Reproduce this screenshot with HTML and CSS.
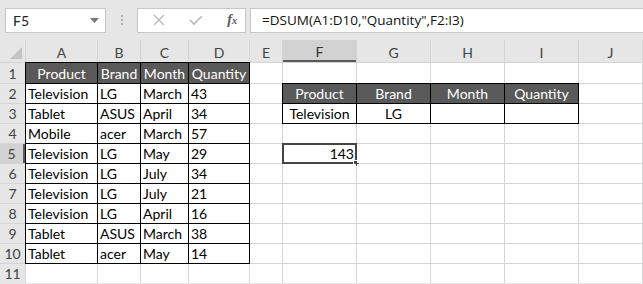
FILE: index.html
```html
<!DOCTYPE html>
<html lang="en">
<head>
    <meta charset="UTF-8">
    <title>DSUM example</title>
    <link rel="stylesheet" href="styles.css">
</head>
<body>
    <div class="toolbar">
        <div class="namebox">
            <span>F5</span>
            <svg class="caret" width="9" height="5" viewBox="0 0 9 5"><path d="M0 0h9L4.5 5z" fill="#777"/></svg>
        </div>
        <div class="grip"><i></i><i></i><i></i></div>
        <div class="fxbox">
            <svg width="12" height="12" viewBox="0 0 12 12"><path d="M1 1l10 10M11 1L1 11" stroke="#b8b8b8" stroke-width="1.2" fill="none"/></svg>
            <svg width="14" height="12" viewBox="0 0 14 12"><path d="M1 6l4 4 8-8" stroke="#b8b8b8" stroke-width="1.6" fill="none"/></svg>
            <span class="fx">f<sub>x</sub></span>
        </div>
        <div class="formula">=DSUM(A1:D10,"Quantity",F2:I3)</div>
    </div>

    <div class="sheet">
        <div class="hd corner"><svg width="12" height="12" viewBox="0 0 12 12"><path d="M12 0v12H0z" fill="#c4c4c4"/></svg></div>
        <div class="hd">A</div><div class="hd">B</div><div class="hd">C</div><div class="hd">D</div>
        <div class="hd">E</div><div class="hd sel">F</div><div class="hd">G</div><div class="hd">H</div>
        <div class="hd">I</div><div class="hd">J</div>

        <div class="rh">1</div>
        <div class="c b th">Product</div><div class="c b th">Brand</div><div class="c b th">Month</div><div class="c b th">Quantity</div>
        <div class="c"></div><div class="c"></div><div class="c"></div><div class="c"></div><div class="c"></div><div class="c"></div>

        <div class="rh">2</div>
        <div class="c b">Television</div><div class="c b">LG</div><div class="c b">March</div><div class="c b">43</div>
        <div class="c"></div><div class="c b th">Product</div><div class="c b th">Brand</div><div class="c b th">Month</div><div class="c b th">Quantity</div><div class="c"></div>

        <div class="rh">3</div>
        <div class="c b">Tablet</div><div class="c b">ASUS</div><div class="c b">April</div><div class="c b">34</div>
        <div class="c"></div><div class="c b mid">Television</div><div class="c b mid">LG</div><div class="c b"></div><div class="c b"></div><div class="c"></div>

        <div class="rh">4</div>
        <div class="c b">Mobile</div><div class="c b">acer</div><div class="c b">March</div><div class="c b">57</div>
        <div class="c"></div><div class="c"></div><div class="c"></div><div class="c"></div><div class="c"></div><div class="c"></div>

        <div class="rh sel">5</div>
        <div class="c b">Television</div><div class="c b">LG</div><div class="c b">May</div><div class="c b">29</div>
        <div class="c"></div><div class="c active num">143<span class="handle"></span></div><div class="c"></div><div class="c"></div><div class="c"></div><div class="c"></div>

        <div class="rh">6</div>
        <div class="c b">Television</div><div class="c b">LG</div><div class="c b">July</div><div class="c b">34</div>
        <div class="c"></div><div class="c"></div><div class="c"></div><div class="c"></div><div class="c"></div><div class="c"></div>

        <div class="rh">7</div>
        <div class="c b">Television</div><div class="c b">LG</div><div class="c b">July</div><div class="c b">21</div>
        <div class="c"></div><div class="c"></div><div class="c"></div><div class="c"></div><div class="c"></div><div class="c"></div>

        <div class="rh">8</div>
        <div class="c b">Television</div><div class="c b">LG</div><div class="c b">April</div><div class="c b">16</div>
        <div class="c"></div><div class="c"></div><div class="c"></div><div class="c"></div><div class="c"></div><div class="c"></div>

        <div class="rh">9</div>
        <div class="c b">Tablet</div><div class="c b">ASUS</div><div class="c b">March</div><div class="c b">38</div>
        <div class="c"></div><div class="c"></div><div class="c"></div><div class="c"></div><div class="c"></div><div class="c"></div>

        <div class="rh">10</div>
        <div class="c b">Tablet</div><div class="c b">acer</div><div class="c b">May</div><div class="c b">14</div>
        <div class="c"></div><div class="c"></div><div class="c"></div><div class="c"></div><div class="c"></div><div class="c"></div>

        <div class="rh">11</div>
        <div class="c"></div><div class="c"></div><div class="c"></div><div class="c"></div>
        <div class="c"></div><div class="c"></div><div class="c"></div><div class="c"></div><div class="c"></div><div class="c"></div>
    </div>
</body>
</html>
```

FILE: styles.css
```css
body {
    margin: 0;
    width: 643px;
    height: 284px;
    overflow: hidden;
    background-color: #e6e6e6;
    font-family: Lato, "Liberation Sans", sans-serif;
}
.toolbar {
    display: flex;
    align-items: center;
    height: 40px;
    padding-left: 5px;
    box-sizing: border-box;
    background-color: #e6e6e6;
}
.namebox, .fxbox, .formula {
    height: 25px;
    box-sizing: border-box;
    background-color: #fff;
    border: 1px solid #c6c6c6;
    display: flex;
    align-items: center;
}
.namebox {
    width: 101px;
    padding: 0 6px 0 7px;
    justify-content: space-between;
    font-size: 14px;
    color: #222;
}
.grip {
    width: 31px;
    display: flex;
    flex-direction: column;
    align-items: center;
    gap: 2px;
}
.grip i {
    width: 2px;
    height: 2px;
    background-color: #b0b0b0;
}
.fxbox {
    width: 109px;
    padding: 0 8px 0 15px;
    justify-content: space-between;
}
.fx {
    font-family: "Liberation Serif", serif;
    font-style: italic;
    font-weight: bold;
    font-size: 14px;
    color: #555;
}
.fx sub {
    font-size: 10px;
    vertical-align: 0;
}
.formula {
    flex: 1;
    margin-left: 4px;
    border-right: none;
    padding-left: 11px;
    font-family: "Open Sans", sans-serif;
    font-size: 13.5px;
    color: #111;
}
.sheet {
    display: grid;
    grid-template-columns: 25px 71px 42px 47px 60px 32px 73px 73px 73px 73px 63px;
    grid-template-rows: 22px 20px repeat(10, 19px);
    gap: 1px;
    padding-right: 1px;
    background-color: #d4d4d4;
    font-size: 14px;
}
.hd, .rh {
    background-color: #e6e6e6;
    color: #444;
    display: flex;
    align-items: center;
    justify-content: center;
}
.hd {
    padding-top: 2px;
    box-sizing: border-box;
}
.corner {
    justify-content: flex-end;
    align-items: flex-end;
    padding: 0 3px 3px 0;
}
.hd.sel {
    background-color: #d2d2d2;
    border-bottom: 2px solid #5a5a5a;
    color: #333;
}
.rh.sel {
    background-color: #d2d2d2;
    border-right: 2px solid #5a5a5a;
}
.c {
    background-color: #fff;
    color: #000;
    padding-left: 2px;
    display: flex;
    align-items: center;
    white-space: nowrap;
    position: relative;
}
.b {
    outline: 1px solid #000;
}
.th {
    background-color: #595959;
    color: #fff;
    justify-content: center;
    padding-left: 0;
}
.mid {
    justify-content: center;
    padding-left: 0;
}
.num {
    justify-content: flex-end;
    padding: 0 2px 0 0;
}
.active {
    outline: 2px solid #454545;
    outline-offset: -1px;
}
.handle {
    position: absolute;
    right: -4px;
    bottom: -4px;
    width: 5px;
    height: 5px;
    background-color: #454545;
    border: 1px solid #fff;
}
```
